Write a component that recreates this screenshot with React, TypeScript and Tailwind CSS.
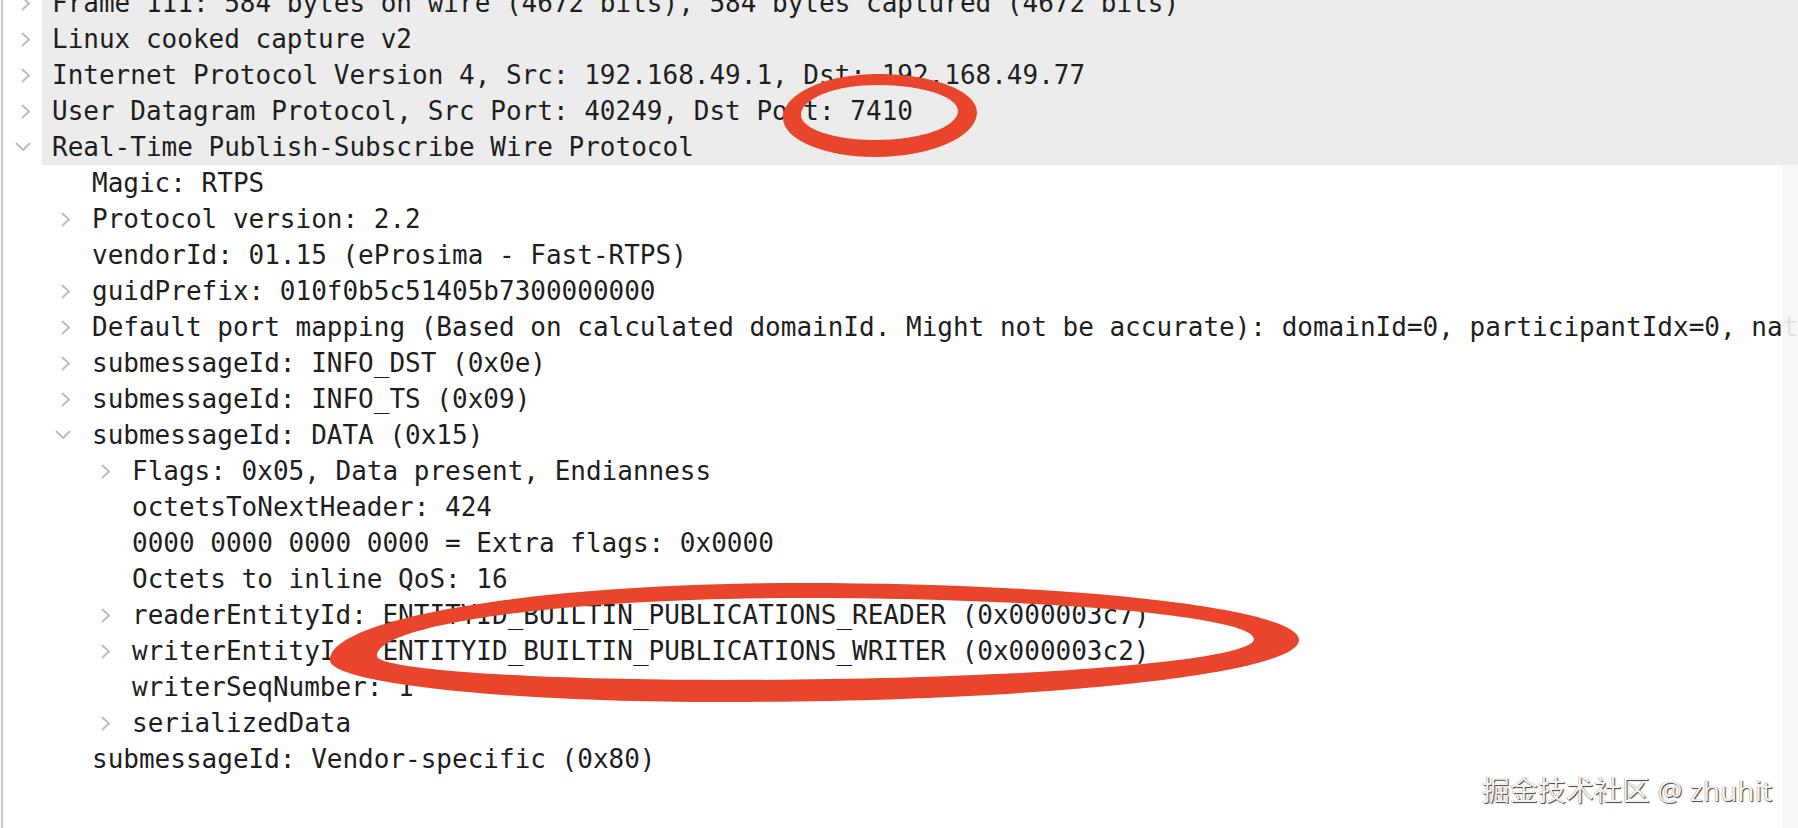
import React from 'react';

type Row = { level: number; arrow?: 'right' | 'down'; text: string; hl?: boolean };

const rows: Row[] = [
  { level: 0, arrow: 'right', hl: true, text: 'Frame 111: 584 bytes on wire (4672 bits), 584 bytes captured (4672 bits)' },
  { level: 0, arrow: 'right', hl: true, text: 'Linux cooked capture v2' },
  { level: 0, arrow: 'right', hl: true, text: 'Internet Protocol Version 4, Src: 192.168.49.1, Dst: 192.168.49.77' },
  { level: 0, arrow: 'right', hl: true, text: 'User Datagram Protocol, Src Port: 40249, Dst Port: 7410' },
  { level: 0, arrow: 'down', hl: true, text: 'Real-Time Publish-Subscribe Wire Protocol' },
  { level: 1, text: 'Magic: RTPS' },
  { level: 1, arrow: 'right', text: 'Protocol version: 2.2' },
  { level: 1, text: 'vendorId: 01.15 (eProsima - Fast-RTPS)' },
  { level: 1, arrow: 'right', text: 'guidPrefix: 010f0b5c51405b7300000000' },
  { level: 1, arrow: 'right', text: 'Default port mapping (Based on calculated domainId. Might not be accurate): domainId=0, participantIdx=0, nature=UNICAST_METATRAFFIC' },
  { level: 1, arrow: 'right', text: 'submessageId: INFO_DST (0x0e)' },
  { level: 1, arrow: 'right', text: 'submessageId: INFO_TS (0x09)' },
  { level: 1, arrow: 'down', text: 'submessageId: DATA (0x15)' },
  { level: 2, arrow: 'right', text: 'Flags: 0x05, Data present, Endianness' },
  { level: 2, text: 'octetsToNextHeader: 424' },
  { level: 2, text: '0000 0000 0000 0000 = Extra flags: 0x0000' },
  { level: 2, text: 'Octets to inline QoS: 16' },
  { level: 2, arrow: 'right', text: 'readerEntityId: ENTITYID_BUILTIN_PUBLICATIONS_READER (0x000003c7)' },
  { level: 2, arrow: 'right', text: 'writerEntityId: ENTITYID_BUILTIN_PUBLICATIONS_WRITER (0x000003c2)' },
  { level: 2, text: 'writerSeqNumber: 1' },
  { level: 2, arrow: 'right', text: 'serializedData' },
  { level: 1, text: 'submessageId: Vendor-specific (0x80)' },
];

const indent = ['w-0', 'w-[40px]', 'w-[80px]'];

const Chevron: React.FC<{ dir: 'right' | 'down' }> = ({ dir }) =>
  dir === 'right' ? (
    <svg width="10" height="15" viewBox="0 0 10 15" fill="none">
      <polyline points="1.5,1.5 8,7.5 1.5,13.5" stroke="#b8b8b8" strokeWidth="1.8" strokeLinecap="round" strokeLinejoin="round" />
    </svg>
  ) : (
    <svg width="16" height="10" viewBox="0 0 16 10" fill="none">
      <polyline points="1.5,1.5 8,8 14.5,1.5" stroke="#b8b8b8" strokeWidth="1.8" strokeLinecap="round" strokeLinejoin="round" />
    </svg>
  );

type P = [number, number];
const K = 0.5523;
// closed elliptical loop through left, top, right, bottom points
function loop(l: P, t: P, r: P, b: P) {
  return [
    `M${l[0]},${l[1]}`,
    `C${l[0]},${l[1] - K * (l[1] - t[1])} ${t[0] - K * (t[0] - l[0])},${t[1]} ${t[0]},${t[1]}`,
    `C${t[0] + K * (r[0] - t[0])},${t[1]} ${r[0]},${r[1] - K * (r[1] - t[1])} ${r[0]},${r[1]}`,
    `C${r[0]},${r[1] + K * (b[1] - r[1])} ${b[0] + K * (r[0] - b[0])},${b[1]} ${b[0]},${b[1]}`,
    `C${b[0] - K * (b[0] - l[0])},${b[1]} ${l[0]},${l[1] + K * (b[1] - l[1])} ${l[0]},${l[1]}Z`,
  ].join(' ');
}

const ring1 = loop([783, 118], [878, 74], [977, 112], [875, 157]) + ' ' + loop([801, 115], [878, 85], [958, 111], [875, 140]);
const ring2 = loop([330, 660], [800, 583], [1299, 640], [720, 702]) + ' ' + loop([377, 656], [800, 598], [1254, 639], [720, 680]);

export default function App() {
  return (
    <div className="relative w-[1798px] h-[828px] overflow-hidden bg-white flex font-['DejaVu_Sans_Mono',monospace] text-[26px] text-[#1e1e1e]">
      <div className="w-[1px] shrink-0" />
      <div className="w-[2px] shrink-0 bg-[#c8c8c8]" />
      <div className="flex-1 min-w-0 -mt-[15px] flex flex-col">
        {rows.map((r, i) => (
          <div key={i} className="flex h-[36px] shrink-0">
            <div className={`${indent[r.level]} shrink-0`} />
            <div className="w-[39px] shrink-0 flex items-center justify-end pr-[11px]">
              {r.arrow && <Chevron dir={r.arrow} />}
            </div>
            <div className={`flex-1 min-w-0 overflow-hidden whitespace-nowrap pl-[10px] leading-[36px] ${r.hl ? 'bg-[#ececec]' : ''}`}>
              {r.text}
            </div>
          </div>
        ))}
      </div>

      {/* faint scroll edge on the right, below the highlighted rows */}
      <div className="absolute right-0 top-[165px] bottom-0 w-[16px] bg-[#f6f6f6]/90" />

      <svg className="absolute inset-0 pointer-events-none" width="1798" height="828" viewBox="0 0 1798 828">
        <path d={ring1} fill="#e8452c" fillRule="evenodd" />
        <path d={ring2} fill="#e8452c" fillRule="evenodd" />
      </svg>

      <div className="absolute right-[26px] top-[772px] text-[28px] leading-[36px] text-[#f2f2f2] font-['Noto_Sans','Noto_Sans_CJK_SC',sans-serif] [text-shadow:1px_1px_1px_rgba(0,0,0,0.75),-0.5px_-0.5px_0_rgba(0,0,0,0.35)]">
        掘金技术社区 @ zhuhit
      </div>
    </div>
  );
}
